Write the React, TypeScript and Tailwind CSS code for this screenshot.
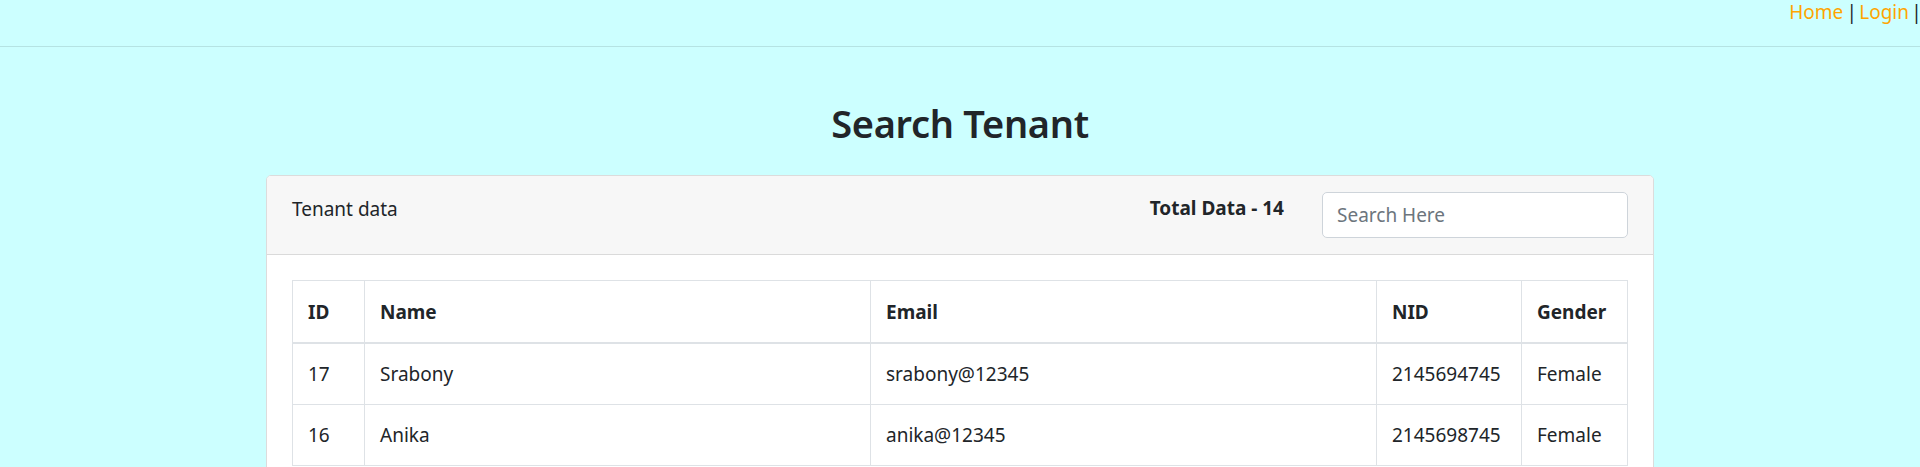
import React from "react";

const rows = [
  { id: "17", name: "Srabony", email: "srabony@12345", nid: "2145694745", gender: "Female" },
  { id: "16", name: "Anika", email: "anika@12345", nid: "2145698745", gender: "Female" },
];

const th = "text-left font-bold px-[15px] pt-[16px] pb-[15px] border border-[#dee2e6] border-b-2";
const td = "px-[15px] py-[15px] border border-[#dee2e6]";

export default function App() {
  return (
    <div
      className="min-h-[467px] bg-[#ccffff] text-[#212529] text-[19px] leading-[30px]"
      style={{ fontFamily: '"Noto Sans", "Open Sans", Arial, sans-serif' }}
    >
      <nav className="h-[47px] border-b border-[#b5e3e3] flex justify-end items-start pr-[1px]">
        <div className="flex items-start text-[19px] leading-[24px]">
          <a className="text-[#ffa500]">Home</a>
          <span className="flex justify-center w-[5px] ml-[6px] mr-[5px]">|</span>
          <a className="text-[#ffa500]">Login</a>
          <span className="flex justify-center w-[5px] ml-[5px]">|</span>
        </div>
      </nav>

      <h2 className="mt-[52px] text-center text-[38px] leading-[48px] font-semibold tracking-[-0.3px]">Search Tenant</h2>

      <div className="mt-[28px] mx-auto w-[1388px] bg-white border border-[#dcdcdc] rounded-[5px] overflow-hidden">
        <div className="h-[79px] bg-[#f7f7f7] border-b border-[#dadada] px-[25px] py-[16px] flex items-start">
          <div className="flex-1 pt-[2px]">Tenant data</div>
          <div className="font-bold mr-[38px] pt-[1px]">Total Data - 14</div>
          <input
            type="text"
            placeholder="Search Here"
            className="w-[306px] h-[46px] bg-white border border-[#ced4da] rounded-[5px] px-[14px] text-[19px] placeholder:text-[#6c757d] outline-none"
          />
        </div>
        <div className="p-[25px]">
          <table className="w-full border-collapse border border-[#dee2e6]">
            <colgroup>
              <col className="w-[72px]" />
              <col className="w-[506px]" />
              <col className="w-[506px]" />
              <col className="w-[145px]" />
              <col />
            </colgroup>
            <thead>
              <tr>
                <th className={th}>ID</th>
                <th className={th}>Name</th>
                <th className={th}>Email</th>
                <th className={th}>NID</th>
                <th className={th}>Gender</th>
              </tr>
            </thead>
            <tbody>
              {rows.map((r) => (
                <tr key={r.id}>
                  <td className={td}>{r.id}</td>
                  <td className={td}>{r.name}</td>
                  <td className={td}>{r.email}</td>
                  <td className={td}>{r.nid}</td>
                  <td className={td}>{r.gender}</td>
                </tr>
              ))}
            </tbody>
          </table>
        </div>
      </div>
    </div>
  );
}
